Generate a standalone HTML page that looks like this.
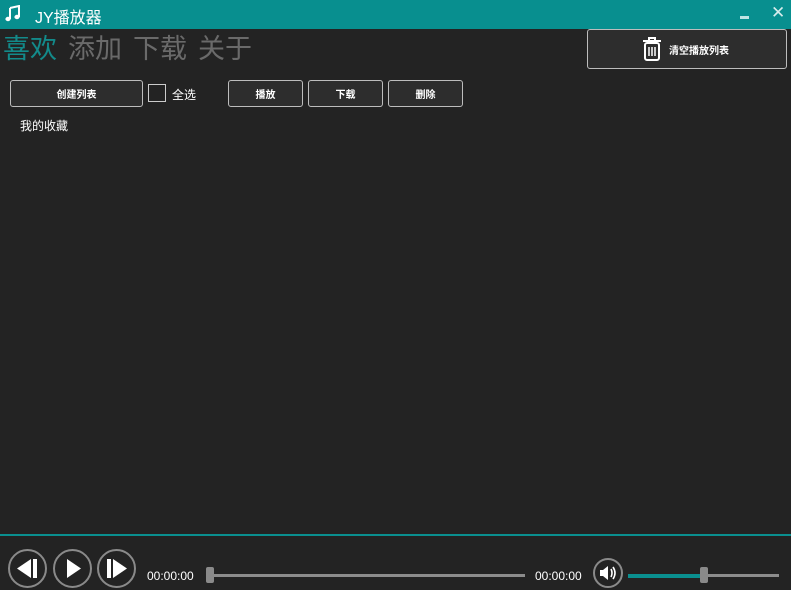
<!DOCTYPE html><html><head><meta charset="utf-8"><style>
*{margin:0;padding:0;box-sizing:border-box}
body{width:791px;height:590px;background:#232323;font-family:"Liberation Sans","Noto Sans CJK SC",sans-serif;position:relative;overflow:hidden;color:#fff}
.a{position:absolute}
.btn{position:absolute;border:1px solid #bdbdbd;border-radius:3px;background:#2d2d2d;font-size:10px;font-weight:bold;display:flex;align-items:center;justify-content:center;color:#fff}
.circ{position:absolute;border:2px solid #8a8a8a;border-radius:50%}
</style></head><body>
<div class="a" style="left:0;top:0;width:791px;height:29px;background:#088f8f"></div>
<svg class="a" style="left:4px;top:5px" width="18" height="18" viewBox="0 0 18 18"><path d="M6 3 L15 1 V12 M6 3 V14" stroke="#fff" stroke-width="2" fill="none"/><ellipse cx="4" cy="14" rx="2.6" ry="2.2" fill="#fff"/><ellipse cx="13" cy="12" rx="2.6" ry="2.2" fill="#fff"/></svg>
<div class="a" style="left:35px;top:4px;font-size:16px;color:#fff">JY播放器</div>
<div class="a" style="left:740px;top:16px;width:9px;height:3px;background:#bfe3e3"></div>
<div class="a" style="left:771px;top:3px;font-size:17px;color:#d7ecec">✕</div>
<div class="a" style="left:3px;top:32px;font-size:27px;line-height:34px;color:#138a8a">喜欢</div>
<div class="a" style="left:68px;top:32px;font-size:27px;line-height:34px;color:#6a6a6a">添加</div>
<div class="a" style="left:133px;top:32px;font-size:27px;line-height:34px;color:#6a6a6a">下载</div>
<div class="a" style="left:198px;top:32px;font-size:27px;line-height:34px;color:#6a6a6a">关于</div>
<div class="btn" style="left:587px;top:29px;width:200px;height:40px;padding-right:4px"><svg width="22" height="26" viewBox="0 0 22 26" style="margin-right:6px"><path d="M2 5 H20 M8 5 V2 H14 V5" stroke="#fff" stroke-width="2" fill="none"/><rect x="4" y="7" width="14" height="17" rx="2" stroke="#fff" stroke-width="2" fill="none"/><path d="M8 11 V20 M11 11 V20 M14 11 V20" stroke="#fff" stroke-width="1.5"/></svg>清空播放列表</div>
<div class="btn" style="left:10px;top:80px;width:133px;height:27px">创建列表</div>
<div class="a" style="left:148px;top:84px;width:18px;height:18px;border:1px solid #ccc"></div>
<div class="a" style="left:172px;top:86px;font-size:12px">全选</div>
<div class="btn" style="left:228px;top:80px;width:75px;height:27px">播放</div>
<div class="btn" style="left:308px;top:80px;width:75px;height:27px">下载</div>
<div class="btn" style="left:388px;top:80px;width:75px;height:27px">删除</div>
<div class="a" style="left:20px;top:117px;font-size:12px">我的收藏</div>
<div class="a" style="left:0;top:534px;width:791px;height:2px;background:#0a8f8f"></div>
<div class="circ" style="left:8px;top:549px;width:39px;height:39px"></div>
<svg class="a" style="left:8px;top:549px" width="39" height="39"><path d="M23 10 V29 L9 19.5Z" fill="#fff"/><rect x="25" y="10" width="4" height="19" fill="#fff"/></svg>
<div class="circ" style="left:53px;top:549px;width:39px;height:39px"></div>
<svg class="a" style="left:53px;top:549px" width="39" height="39"><path d="M14 10 V29 L28 19.5Z" fill="#fff"/></svg>
<div class="circ" style="left:97px;top:549px;width:39px;height:39px"></div>
<svg class="a" style="left:97px;top:549px" width="39" height="39"><rect x="10" y="10" width="4" height="19" fill="#fff"/><path d="M16 10 V29 L30 19.5Z" fill="#fff"/></svg>
<div class="a" style="left:147px;top:569px;font-size:12px">00:00:00</div>
<div class="a" style="left:210px;top:574px;width:315px;height:3px;background:#8c8c8c"></div>
<div class="a" style="left:206px;top:567px;width:8px;height:16px;border-radius:2px;background:#8a8a8a"></div>
<div class="a" style="left:535px;top:569px;font-size:12px">00:00:00</div>
<div class="circ" style="left:593px;top:558px;width:30px;height:30px"></div>
<svg class="a" style="left:593px;top:558px" width="30" height="30"><path d="M7 12 H10 L15 8 V22 L10 18 H7Z" fill="#fff"/><path d="M18 11 Q20 15 18 19 M20 9 Q24 15 20 21" stroke="#fff" stroke-width="1.6" fill="none"/></svg>
<div class="a" style="left:628px;top:574px;width:76px;height:4px;background:#0a8f8f"></div>
<div class="a" style="left:704px;top:574px;width:75px;height:3px;background:#8c8c8c"></div>
<div class="a" style="left:700px;top:567px;width:8px;height:16px;border-radius:2px;background:#8a8a8a"></div>
</body></html>
